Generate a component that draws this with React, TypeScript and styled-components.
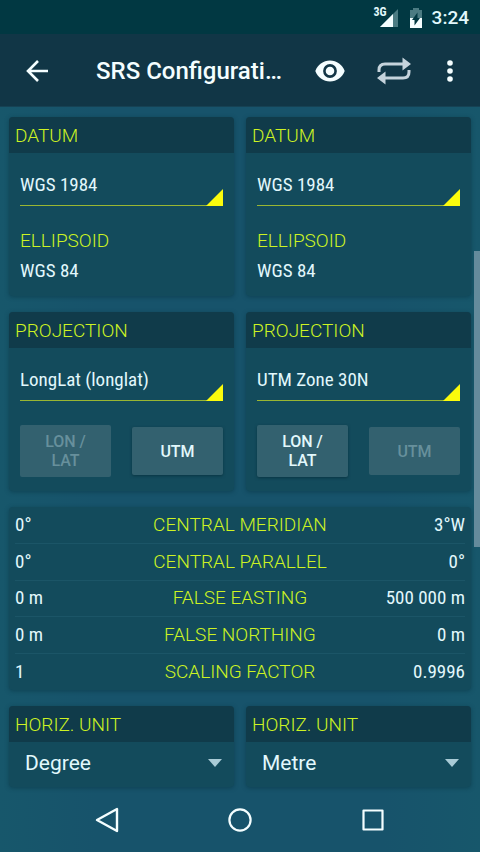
import React, { useState } from "react";
import styled, { createGlobalStyle } from "styled-components";

const condensed = `"Roboto Condensed", Roboto, sans-serif`;
const accent = "#cdf323";

const GlobalStyle = createGlobalStyle`
  *, *::before, *::after { box-sizing: border-box; }
  body { margin: 0; background: #17546a; }
  button, select { font: inherit; color: inherit; }
`;

const Screen = styled.div`
  display: flex;
  flex-direction: column;
  min-height: 100vh;
  background: linear-gradient(90deg, #17576b, #17536b 20%, #17536b 80%, #17576b);
  color: #e2f8fc;
  font-family: Roboto, sans-serif;
  font-size: 19px;
  line-height: 24px;
`;

const StatusBar = styled.div`
  display: flex;
  align-items: center;
  justify-content: flex-end;
  height: 34px;
  padding: 1px 11px 0;
  background: #013842;
  font-size: 19px;
  font-weight: 500;
`;

const StatusClock = styled.time`
  margin-left: 9px;
`;

const NetworkLabel = styled.span`
  align-self: flex-start;
  margin: 5px -8px 0 0;
  font-family: ${condensed};
  font-size: 12px;
  font-weight: 700;
  line-height: 12px;
`;

const BatteryIcon = styled.svg`
  margin-left: 10px;
`;

const AppBar = styled.header`
  display: flex;
  align-items: center;
  height: 73px;
  padding: 2px 6px 0 13px;
  background: #113646;
  border-bottom: 1px solid #164254;
`;

const Title = styled.h1`
  flex: 1;
  min-width: 0;
  margin: 0 16px 0 35px;
  overflow: hidden;
  text-overflow: ellipsis;
  white-space: nowrap;
  color: #f4feff;
  font-size: 24px;
  font-weight: 500;
  line-height: 32px;
`;

const IconButton = styled.button<{ $width: number }>`
  display: flex;
  flex: none;
  align-items: center;
  justify-content: center;
  width: ${(p) => p.$width}px;
  height: 48px;
  padding: 0;
  border: 0;
  background: none;
  color: #f4feff;
`;

const Content = styled.main`
  position: relative;
  display: flex;
  flex: 1;
  flex-direction: column;
  gap: 16px;
  padding: 10px 9px 0;
`;

const ScrollThumb = styled.div`
  position: absolute;
  top: 144px;
  right: 0;
  width: 6px;
  height: 296px;
  background: #648b9c;
`;

const Columns = styled.div`
  display: grid;
  grid-template-columns: 1fr 1fr;
  gap: 12px;
`;

const Card = styled.section`
  overflow: hidden;
  border-radius: 4px;
  background: #134b5c;
  box-shadow: 0 1px 4px rgba(6, 48, 62, 0.5);
`;

const CardTitle = styled.h2`
  margin: 0;
  padding: 7px 6px 5px;
  background: #103b4a;
  color: ${accent};
  font-size: 19px;
  font-weight: 300;
  line-height: 24px;
`;

const CardBody = styled.div<{ $bottom: number }>`
  padding: 12px 11px ${(p) => p.$bottom}px;
`;

const PickerFrame = styled.div`
  position: relative;
  border-bottom: 1px solid #9ab632;
`;

const Picker = styled.select`
  display: block;
  width: 100%;
  height: 40px;
  padding: 0 16px 1px 0;
  border: 0;
  outline: 0;
  appearance: none;
  background: none;
  font-family: ${condensed};
`;

const PickerCorner = styled.svg`
  position: absolute;
  right: 0;
  bottom: -1px;
  pointer-events: none;
`;

const Subheading = styled.h3`
  margin: 23px 0 6px;
  color: ${accent};
  font-size: 19px;
  font-weight: 300;
  line-height: 24px;
`;

const Value = styled.p`
  margin: 0;
  font-family: ${condensed};
`;

const ButtonRow = styled.div`
  display: grid;
  grid-template-columns: 1fr 1fr;
  align-items: center;
  gap: 21px;
  margin-top: 24px;
`;

const ActionButton = styled.button`
  min-height: 48px;
  padding: 7px 16px;
  border: 0;
  border-radius: 2px;
  background: #33616f;
  box-shadow: 0 1px 3px rgba(4, 40, 52, 0.6);
  font-size: 16px;
  font-weight: 500;
  line-height: 19px;

  &:disabled {
    color: #67909c;
    box-shadow: none;
  }
`;

const ParameterTable = styled.table`
  width: calc(100% - 12px);
  height: 183px;
  margin: 0 6px;
  border-collapse: collapse;

  tr + tr {
    border-top: 1px solid #1b5567;
  }
`;

const ParameterName = styled.th`
  padding: 5px 0;
  color: ${accent};
  font-weight: 300;
  text-align: center;
`;

const ParameterValue = styled.td<{ $align: "left" | "right" }>`
  width: 84px;
  padding: 5px 0;
  font-family: ${condensed};
  text-align: ${(p) => p.$align};
  white-space: nowrap;
`;

const UnitFrame = styled.div`
  position: relative;
`;

const UnitSelect = styled.select`
  display: block;
  width: 100%;
  height: 45px;
  padding: 0 40px 3px 16px;
  border: 0;
  outline: 0;
  appearance: none;
  background: none;
  font-size: 21px;
`;

const UnitArrow = styled.svg`
  position: absolute;
  top: 17px;
  right: 12px;
  pointer-events: none;
`;

const NavBar = styled.nav`
  display: flex;
  align-items: center;
  justify-content: center;
  gap: 85px;
  height: 65px;
`;

const parameters = [
  { name: "CENTRAL MERIDIAN", source: "0°", target: "3°W" },
  { name: "CENTRAL PARALLEL", source: "0°", target: "0°" },
  { name: "FALSE EASTING", source: "0 m", target: "500 000 m" },
  { name: "FALSE NORTHING", source: "0 m", target: "0 m" },
  { name: "SCALING FACTOR", source: "1", target: "0.9996" },
];

const systems = [
  { id: "source", datum: "WGS 1984", ellipsoid: "WGS 84", projection: "LongLat (longlat)", geographic: true, unit: "Degree" },
  { id: "target", datum: "WGS 1984", ellipsoid: "WGS 84", projection: "UTM Zone 30N", geographic: false, unit: "Metre" },
];

function CornerPicker({ label, value }: { label: string; value: string }) {
  return (
    <PickerFrame>
      <Picker aria-label={label} defaultValue={value}>
        <option>{value}</option>
      </Picker>
      <PickerCorner width="17" height="17" viewBox="0 0 17 17" aria-hidden="true">
        <path d="M17 0v17H0z" fill="#fbfb0c" />
      </PickerCorner>
    </PickerFrame>
  );
}

function UnitPicker({ label, initial }: { label: string; initial: string }) {
  const [unit, setUnit] = useState(initial);
  return (
    <UnitFrame>
      <UnitSelect aria-label={label} value={unit} onChange={(e) => setUnit(e.target.value)}>
        <option>Degree</option>
        <option>Metre</option>
      </UnitSelect>
      <UnitArrow width="14" height="8" viewBox="0 0 14 8" aria-hidden="true">
        <path d="M0 0h14L7 8z" fill="#a9cbd6" />
      </UnitArrow>
    </UnitFrame>
  );
}

export default function App() {
  return (
    <Screen>
      <GlobalStyle />
      <StatusBar>
        <NetworkLabel>3G</NetworkLabel>
        <svg width="20" height="20" viewBox="0 0 20 20" aria-hidden="true">
          <path d="M19 1v18H1z" fill="#4b7b82" />
          <path d="M14 6v13H1z" fill="#f4feff" />
        </svg>
        <BatteryIcon width="14" height="20" viewBox="0 0 14 20" aria-hidden="true">
          <path d="M4 0h6v2h3v9H1V2h3z" fill="#4b7b82" />
          <path d="M1 10h12v10H1z" fill="#f4feff" />
          <path d="M8.5 4.5v5.5H11L5.500 17.500V12H3z" fill="#013842" />
        </BatteryIcon>
        <StatusClock>3:24</StatusClock>
      </StatusBar>
      <AppBar>
        <IconButton $width={48} aria-label="Back">
          <svg width="24" height="24" viewBox="0 0 24 24" fill="none" stroke="currentColor" strokeWidth="2.600">
            <path d="M23 12H4M13 2L3 12l10 10" />
          </svg>
        </IconButton>
        <Title>SRS Configuration</Title>
        <IconButton $width={64} aria-label="Preview">
          <svg width="30" height="22" viewBox="0 0 30 22">
            <path d="M15 0.500C8.300 0.500 2.500 4.700 0.300 11c2.200 6.300 8 10.500 14.700 10.500S27.500 17.300 29.700 11C27.500 4.700 21.700 0.500 15 0.500z" fill="currentColor" />
            <circle cx="15" cy="11" r="5.600" fill="currentColor" stroke="#113646" strokeWidth="2.600" />
          </svg>
        </IconButton>
        <IconButton $width={64} aria-label="Swap systems">
          <svg width="34" height="28" viewBox="0 0 34 28" fill="none" stroke="#c5d3dc" strokeWidth="3">
            <path d="M2 15v-2q0-6 6-6h19M32 13v2q0 6-6 6H8" />
            <path d="M25.500 0.500L34 7l-8.500 6.500zM8.500 14.500L0 21l8.500 6.500z" fill="#c5d3dc" stroke="none" />
          </svg>
        </IconButton>
        <IconButton $width={48} aria-label="More options">
          <svg width="6" height="22" viewBox="0 0 6 22" fill="currentColor">
            <circle cx="3" cy="3" r="2.800" />
            <circle cx="3" cy="11" r="2.800" />
            <circle cx="3" cy="19" r="2.800" />
          </svg>
        </IconButton>
      </AppBar>
      <Content>
        <Columns>
          {systems.map((s) => (
            <Card key={s.id}>
              <CardTitle>DATUM</CardTitle>
              <CardBody $bottom={13}>
                <CornerPicker label={`Datum, ${s.id}`} value={s.datum} />
                <Subheading>ELLIPSOID</Subheading>
                <Value>{s.ellipsoid}</Value>
              </CardBody>
            </Card>
          ))}
        </Columns>
        <Columns>
          {systems.map((s) => (
            <Card key={s.id}>
              <CardTitle>PROJECTION</CardTitle>
              <CardBody $bottom={14}>
                <CornerPicker label={`Projection, ${s.id}`} value={s.projection} />
                <ButtonRow>
                  <ActionButton disabled={s.geographic}>LON / LAT</ActionButton>
                  <ActionButton disabled={!s.geographic}>UTM</ActionButton>
                </ButtonRow>
              </CardBody>
            </Card>
          ))}
        </Columns>
        <Card>
          <ParameterTable>
            <tbody>
              {parameters.map((p) => (
                <tr key={p.name}>
                  <ParameterValue $align="left">{p.source}</ParameterValue>
                  <ParameterName scope="row">{p.name}</ParameterName>
                  <ParameterValue $align="right">{p.target}</ParameterValue>
                </tr>
              ))}
            </tbody>
          </ParameterTable>
        </Card>
        <Columns>
          {systems.map((s) => (
            <Card key={s.id}>
              <CardTitle>HORIZ. UNIT</CardTitle>
              <UnitPicker label={`Horizontal unit, ${s.id}`} initial={s.unit} />
            </Card>
          ))}
        </Columns>
        <ScrollThumb />
      </Content>
      <NavBar>
        <IconButton $width={48} aria-label="System back">
          <svg width="24" height="26" viewBox="0 0 24 26" fill="none" stroke="currentColor" strokeWidth="2.400" strokeLinejoin="round">
            <path d="M22 2v22L2 13z" />
          </svg>
        </IconButton>
        <IconButton $width={48} aria-label="Home">
          <svg width="24" height="24" viewBox="0 0 24 24" fill="none" stroke="currentColor" strokeWidth="2.200">
            <circle cx="12" cy="12" r="10.600" />
          </svg>
        </IconButton>
        <IconButton $width={48} aria-label="Recent apps">
          <svg width="22" height="22" viewBox="0 0 22 22" fill="none" stroke="currentColor" strokeWidth="2.200" strokeLinejoin="round">
            <path d="M1.500 1.500h19v19h-19z" />
          </svg>
        </IconButton>
      </NavBar>
    </Screen>
  );
}
